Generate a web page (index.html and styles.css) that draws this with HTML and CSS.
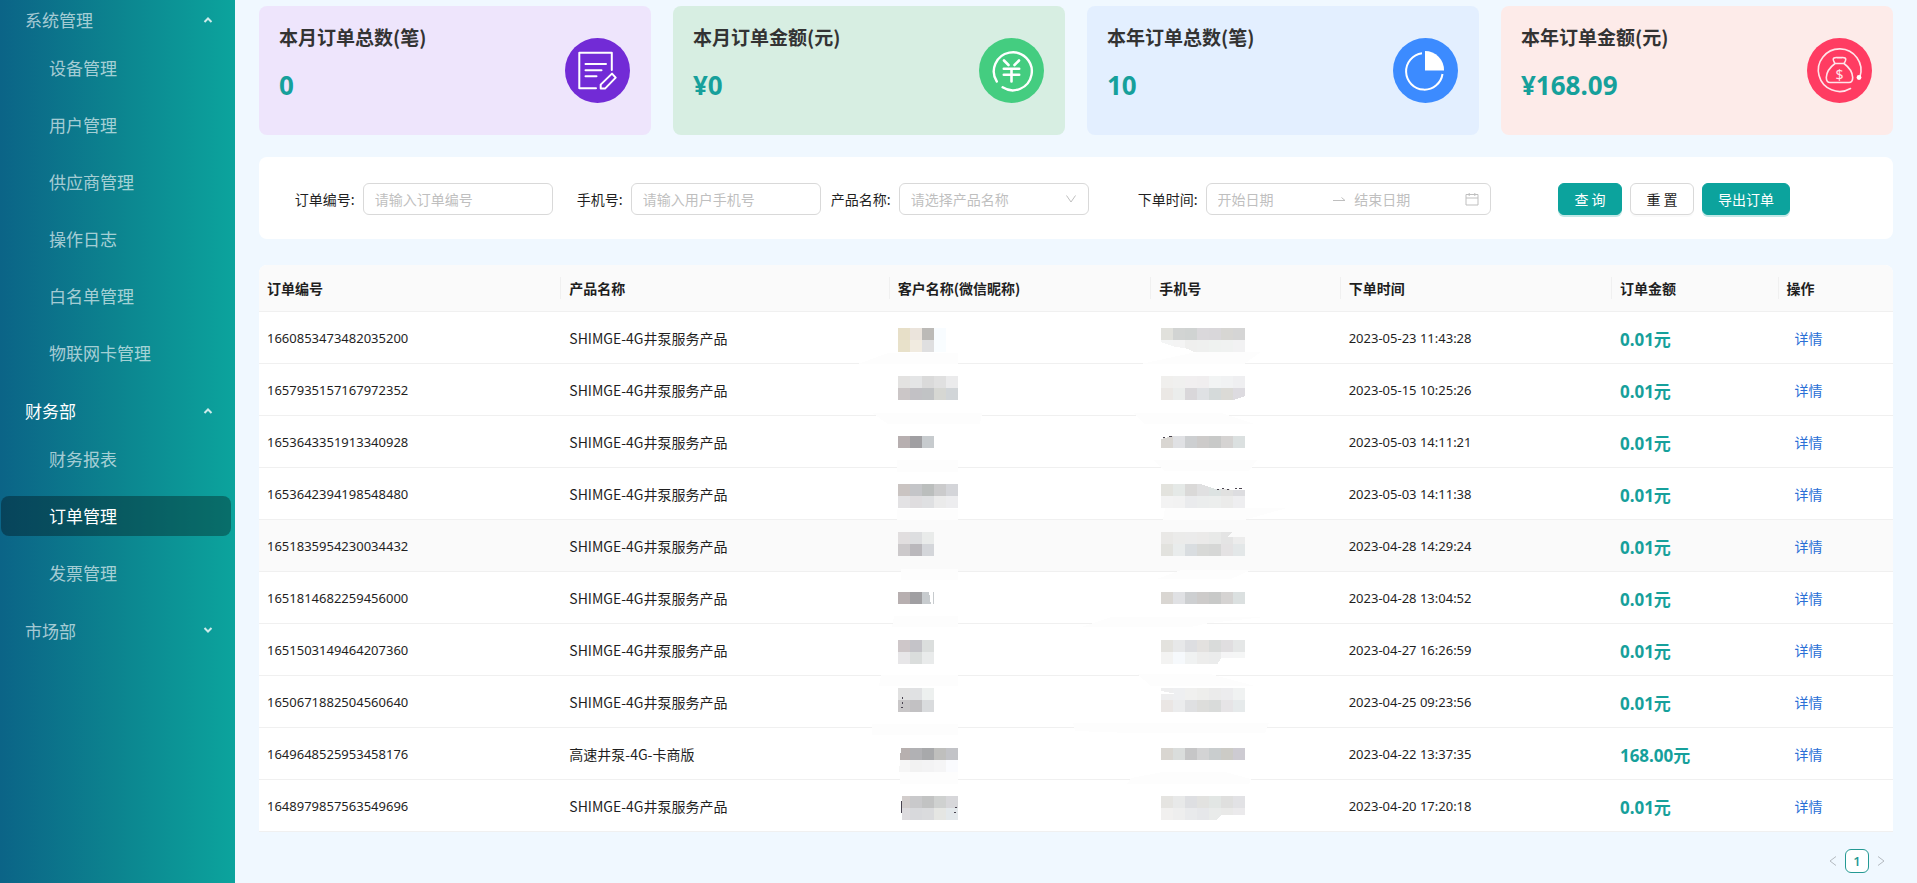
FILE: index.html
```html
<!DOCTYPE html>
<html lang="zh-CN">
<head>
<meta charset="utf-8">
<title>订单管理</title>
<link rel="stylesheet" href="styles.css">
</head>
<body>
<div class="layout">
  <nav class="sidebar">
    <section class="group">
      <button class="group-title" type="button">系统管理
        <svg class="caret" viewBox="0 0 10 10"><path d="M1.5 7 5 3.5 8.500 7"/></svg>
      </button>
      <a class="item" href="#">设备管理</a>
      <a class="item" href="#">用户管理</a>
      <a class="item" href="#">供应商管理</a>
      <a class="item" href="#">操作日志</a>
      <a class="item" href="#">白名单管理</a>
      <a class="item" href="#">物联网卡管理</a>
    </section>
    <section class="group">
      <button class="group-title open" type="button">财务部
        <svg class="caret" viewBox="0 0 10 10"><path d="M1.5 7 5 3.5 8.500 7"/></svg>
      </button>
      <a class="item" href="#">财务报表</a>
      <a class="item active" href="#">订单管理</a>
      <a class="item" href="#">发票管理</a>
    </section>
    <section class="group">
      <button class="group-title" type="button">市场部
        <svg class="caret" viewBox="0 0 10 10"><path d="M1.5 2 5 5.500 8.500 2"/></svg>
      </button>
    </section>
  </nav>

  <main class="content">
    <div class="cards">
      <article class="card purple">
        <div class="card-text"><h2>本月订单总数(笔)</h2><p>0</p></div>
        <svg class="card-icon" viewBox="0 0 65 65" fill="none" stroke="#fff" stroke-width="2" stroke-linecap="round" stroke-linejoin="round">
          <circle cx="32.5" cy="32.5" r="32.5" fill="#722bd6" stroke="none"/>
          <path d="M46.800 32V14.700H14.300V50.300H31M20.500 26H41M20.500 32.300H36.500M20.500 38.300H31.500"/>
          <path d="M47 35.600 50.700 39.600 40 50.600H35.700V46.600Z"/>
        </svg>
      </article>
      <article class="card green">
        <div class="card-text"><h2>本月订单金额(元)</h2><p>¥0</p></div>
        <svg class="card-icon" viewBox="0 0 65 65" fill="none" stroke="#fff" stroke-width="2.6" stroke-linecap="round">
          <circle cx="32.5" cy="32.5" r="32.5" fill="#44cd80" stroke="none"/>
          <path d="M17.800 43.500A19 19 0 1 1 23.600 49.300" stroke-width="2.4"/>
          <path d="M25 22.500 29.500 27M40 22.500 35.500 27M24.800 30.700H40.200M24.800 36.700H40.200M32.500 30.700V43.500"/>
        </svg>
      </article>
      <article class="card blue">
        <div class="card-text"><h2>本年订单总数(笔)</h2><p>10</p></div>
        <svg class="card-icon" viewBox="0 0 65 65" fill="none" stroke="#fff" stroke-width="2">
          <circle cx="32.5" cy="32.5" r="32.5" fill="#3c8bff" stroke="none"/>
          <path d="M29 15.200A18.300 18.300 0 1 0 49.500 36"/>
          <path d="M32 13A19 19 0 0 1 51 32.500H32Z" fill="#fff" stroke="none"/>
        </svg>
      </article>
      <article class="card red">
        <div class="card-text"><h2>本年订单金额(元)</h2><p>¥168.09</p></div>
        <svg class="card-icon" viewBox="0 0 65 65" fill="none" stroke="#ffe4ea" stroke-width="1.600" stroke-linecap="round">
          <circle cx="32.5" cy="32.5" r="32.5" fill="#ff3c62" stroke="none"/>
          <path d="M53 38.500A21.300 21.300 0 1 0 43.500 50.500"/>
          <circle cx="52" cy="39.500" r="2.400" fill="#fff" stroke="none"/>
          <path d="M28 25.500C26 22.500 25.500 21 27 20 29 19 30.500 20 32.500 19.500 34.500 20 36 19 38 20 39.500 21 39 22.500 37 25.500M28 25.500H37M28 25.500C22 30 19.500 34 19.300 39.500 19.300 43.500 20.500 44.500 23 44.500H42C44.500 44.500 45.700 43.500 45.700 39.500 45.500 34 43 30 37 25.500" stroke-linejoin="round"/>
          <text class="dollar" x="32.500" y="41.500" text-anchor="middle">$</text>
        </svg>
      </article>
    </div>

    <form class="filters">
      <div class="field"><label for="order-no">订单编号:</label><input class="control" id="order-no" type="text" placeholder="请输入订单编号"></div>
      <div class="field"><label for="phone">手机号:</label><input class="control" id="phone" type="text" placeholder="请输入用户手机号"></div>
      <div class="field"><label for="product">产品名称:</label>
        <div class="select-box control">
          <select id="product"><option>请选择产品名称</option></select>
          <svg class="arrow" viewBox="0 0 12 12"><path d="M1.500 2.500 6 9 10.500 2.500"/></svg>
        </div>
      </div>
      <div class="field"><label for="start">下单时间:</label>
        <div class="range control">
          <input id="start" type="text" placeholder="开始日期">
          <svg class="swap" viewBox="0 0 14 14"><path d="M1 8.500H13L9.500 5.500"/></svg>
          <input type="text" placeholder="结束日期" aria-label="结束日期">
          <svg class="calendar" viewBox="0 0 14 14"><path d="M1 2.500H13V13H1ZM1 6H13M4.200 1V4M9.800 1V4"/></svg>
        </div>
      </div>
      <div class="actions">
        <button class="btn primary" type="button">查 询</button>
        <button class="btn" type="button">重 置</button>
        <button class="btn primary" type="button">导出订单</button>
      </div>
    </form>

    <table class="orders">
      <colgroup><col class="c-no"><col class="c-product"><col class="c-name"><col class="c-phone"><col class="c-time"><col class="c-amount"><col class="c-action"></colgroup>
      <thead>
        <tr><th>订单编号</th><th>产品名称</th><th>客户名称(微信昵称)</th><th>手机号</th><th>下单时间</th><th>订单金额</th><th>操作</th></tr>
      </thead>
      <tbody id="rows"></tbody>
    </table>

    <div class="pager">
      <button class="page-arrow" type="button" aria-label="上一页"><svg viewBox="0 0 12 12"><path d="M9 1.500 3 6 9 10.500"/></svg></button>
      <button class="page-current" type="button">1</button>
      <button class="page-arrow" type="button" aria-label="下一页"><svg viewBox="0 0 12 12"><path d="M3 1.500 9 6 3 10.500"/></svg></button>
    </div>
  </main>
</div>
<script src="script.js"></script>
</body>
</html>
```

FILE: styles.css
```css
* { box-sizing: border-box; }

body {
  margin: 0;
  background: #f0f8ff;
  color: #1f1f1f;
  font: 14px/22px "Noto Sans CJK SC", "Noto Sans", sans-serif;
}

button, input, select { font: inherit; color: inherit; margin: 0; }
button { cursor: pointer; }
a { text-decoration: none; }
svg { flex: none; }

.layout { display: flex; min-height: 100vh; }

/* sidebar */
.sidebar {
  flex: none;
  width: 235px;
  padding: 0 4px 0 1px;
  background: linear-gradient(90deg, #0b6487 0%, #0c848f 50%, #0ca49d 100%);
  font-size: 17px;
}
.group { display: flex; flex-direction: column; gap: 17px; margin-bottom: 18px; }
.group-title {
  display: flex;
  align-items: center;
  justify-content: space-between;
  height: 40px;
  margin-bottom: -9px;
  padding: 0 18px 0 24px;
  border: 0;
  background: none;
  color: rgba(255, 255, 255, 0.65);
}
.caret { width: 10px; height: 10px; fill: none; stroke: currentColor; stroke-width: 2; }
.group-title .caret { color: rgba(255, 255, 255, 0.8); }
.item {
  display: flex;
  align-items: center;
  height: 40px;
  padding-left: 48px;
  border-radius: 8px;
  color: rgba(255, 255, 255, 0.65);
}
.group-title.open, .item.active { color: #fff; }
.item.active { background: rgba(0, 0, 0, 0.32); }

/* summary cards */
.content { flex: 1; min-width: 0; padding: 6px 24px 0; }
.cards { display: grid; grid-template-columns: repeat(4, 1fr); gap: 22px; }
.card {
  display: flex;
  align-items: center;
  justify-content: space-between;
  padding: 0 21px 0 20px;
  border-radius: 8px;
}
.card-text { padding: 15px 0 30px; }
.card h2 { margin: 0 0 12px; color: #333; font-size: 19px; line-height: 32px; }
.card p {
  margin: 0;
  color: #16a09b;
  font: bold 26px/40px "Noto Sans", "Noto Sans CJK SC", sans-serif;
}
.card-icon { width: 65px; height: 65px; }
.dollar { fill: #ffe4ea; stroke: none; font: 14px "Noto Sans", sans-serif; }
.purple { background: #eee5fc; }
.green { background: #d7eee2; }
.blue { background: #e3efff; }
.red { background: #fdebe9; }

/* filter form */
.filters {
  display: grid;
  grid-template-columns: 2fr 2fr 2fr 3fr 3fr;
  align-items: center;
  margin-top: 22px;
  padding: 26px 0 24px 26px;
  border-radius: 8px;
  background: #fff;
}
.field { display: flex; align-items: center; justify-content: flex-end; gap: 8px; min-width: 0; }
.field label { white-space: nowrap; }
.control {
  width: 71%;
  height: 32px;
  padding: 0 11px;
  border: 1px solid #d9d9d9;
  border-radius: 6px;
  background: #fff;
}
.field input { outline: 0; }
.field ::placeholder { color: #bfbfbf; opacity: 1; }
.select-box, .range { display: flex; align-items: center; }
.select-box select {
  flex: 1;
  min-width: 0;
  border: 0;
  outline: 0;
  padding: 0;
  appearance: none;
  background: none;
  color: #bfbfbf;
}
.arrow, .swap, .calendar { fill: none; stroke: #bfbfbf; stroke-width: 1; }
.arrow { width: 12px; height: 12px; }
.swap { width: 14px; height: 14px; margin: 0 8px; }
.calendar { width: 14px; height: 14px; margin-left: 4px; }
.range input { flex: 1; min-width: 0; width: 0; padding: 0; border: 0; background: none; }
.actions { display: flex; gap: 8px; padding-left: 67px; }
.btn {
  min-width: 64px;
  height: 32px;
  padding: 0 15px;
  border: 1px solid #d9d9d9;
  border-radius: 6px;
  background: #fff;
  box-shadow: 0 2px 0 rgba(0, 0, 0, 0.02);
  white-space: nowrap;
}
.btn.primary {
  border-color: #0ca39d;
  background: #0ca39d;
  box-shadow: 0 2px 0 rgba(12, 163, 157, 0.25);
  color: #fff;
}

/* orders table */
.orders {
  width: 100%;
  margin-top: 26px;
  border-spacing: 0;
  table-layout: fixed;
  background: #fff;
  border-radius: 8px 8px 0 0;
}
.c-no { width: 18.5%; }
.c-product { width: 20.1%; }
.c-name { width: 16%; }
.c-phone { width: 11.6%; }
.c-time { width: 16.6%; }
.c-amount { width: 10.2%; }
.c-action { width: 7%; }
.orders th, .orders td { padding: 0 8px; border-bottom: 1px solid #f0f0f0; text-align: left; }
.orders th {
  height: 47px;
  background: linear-gradient(#f0f0f0, #f0f0f0) right center / 1px 22px no-repeat #fafafa;
}
.orders th:first-child { border-top-left-radius: 8px; }
.orders th:last-child { border-top-right-radius: 8px; background: #fafafa; }
.orders td { height: 52px; }
.orders tr.hover td { background: #fafafa; }
.orders td.num { font-family: "Noto Sans", sans-serif; font-size: 13px; }
.orders td.amount {
  padding-top: 4px;
  color: #16a09b;
  font: bold 17px/24px "Noto Sans", "Noto Sans CJK SC", sans-serif;
}
.orders td.masked { padding: 0 8px; }
.orders td.masked.phone { padding-left: 10px; }
.mosaic { position: relative; display: block; width: 84px; height: 51px; overflow: visible; }
.orders td.link { padding-left: 16px; }
.link a { color: #2a6fd6; }

/* pagination */
.pager { display: flex; justify-content: flex-end; margin-top: 17px; }
.page-arrow, .page-current {
  display: flex;
  align-items: center;
  justify-content: center;
  width: 24px;
  height: 24px;
  padding: 0;
  border: 0;
  background: none;
}
.page-arrow svg { width: 12px; height: 12px; fill: none; stroke: #b4bac0; stroke-width: 1; }
.page-current {
  border: 1px solid #249993;
  border-radius: 6px;
  background: #fff;
  color: #249993;
  font: 600 13px/22px "Open Sans", "Noto Sans", sans-serif;
}
```

FILE: script.js
```js
// Masked cells: y is the top of the tiles inside the row, rows hold 12px tile colours,
// cover holds light strokes left by the masking brush, marks holds dark leftovers.
const P = 'SHIMGE-4G井泵服务产品';
const orders = [
  { no: '1660853473482035200', time: '2023-05-23 11:43:28', y: 16,
    name: ['e7dfc8 ebe4dc bcbab7 f8fcff', 'e8e1ca f1ebe0 dfdfe0 f9fdff'],
    phone: ['e1e1dc d2d4d3 d0d3d2 dad8db d9d7da d7d6d3 d5d5d5', 'f4f5f5 f4f4f4 efefee eff0ef eff2f0 f0f2f1 f2f2f3'],
    nameCover: '-40,52 -10,41 60,41 60,52', phoneCover: '-20,52 35,40 100,40 83,52', phoneCut: '0,30 14,35 24,36 36,41 0,41' },
  { no: '1657935157167972352', time: '2023-05-15 10:25:26', y: 12,
    name: ['e3e2e1 e4e5e6 dadada e0e0e0 ebebec', 'cbc6c7 c2c1c5 c1c3c5 d6d7d3 d1d5d8'],
    phone: ['f0efed f0f0ef f1eff0 f0eeef f2f4f4 f1f2f3 efeff1', 'ebe8e5 ebedec d9d7da dfe1e4 d5dada dbdad6 dddbe0'],
    nameCover: '-26,49 84,49 82,60 -10,60', phoneCover: '-28,49 60,49 94,60 -16,60', phoneCut: '72,36 84,32 84,37' },
  { no: '1653643351913340928', time: '2023-05-03 14:11:21', y: 20,
    name: ['b7afb0 a09fa2 c7cbce'], phone: ['d9d6d2 e0e1e4 cdcfd1 cdcbca c8c9c8 d5d3d2 dbe0e0'],
    nameCover: '-1,44 60,44 60,56 -1,56', phoneCover: '-8,44 96,44 88,55 4,55', phoneCut: '0,20 12,20 0,23', phoneMarks: [[2, 21, 2], [8, 20, 3]] },
  { no: '1653642394198548480', time: '2023-05-03 14:11:38', y: 16,
    name: ['cac4c2 c4c5c8 bbbebd cbcbcc d4d5d9', 'e3e2e4 dfdddf dfe0e2 ebebeb ededef'],
    phone: ['e3e3de e5e9e7 dad9d8 e0e0e1 dde3e2 e1e1e0 dddde0', 'f3f3f3 f2f2f2 eaebed ebeded eceeed ebebea eeeef0'],
    nameCover: '-1,41 60,41 60,52 -1,52', phoneCover: '4,40 126,40 83,52 2,52', phoneCut: '36,15 84,15 84,22 54,21', phoneMarks: [[56, 21, 2], [61, 20, 2], [66, 21, 2], [74, 20, 2], [78, 20, 3]] },
  { no: '1651835954230034432', time: '2023-04-28 14:29:24', y: 12, hover: true,
    name: ['e1dedf dddee0 e9ebea', 'ccc9cb bab8bc d4d6da'],
    phone: ['e9e8e6 ebebea ebebeb ebeae9 e8e9e8 e4e4e4 ececec', 'e2e2de e9ecec d9dde0 d8d9d7 d6d7d6 e4e2e3 e3e7e8'],
    nameCover: '3,49 60,49 60,60 3,60', phoneCover: '-4,59 20,50 90,50 70,59', phoneCut: '73,11 84,11 84,17 66,17' },
  { no: '1651814682259456000', time: '2023-04-28 13:04:52', y: 20,
    name: ['b7afb0 a09fa2 c7cbce'], phone: ['d9d6d2 e0e1e4 cdcfd1 cdcbca c8c9c8 d5d3d2 dbe0e0'],
    nameCover: '-4,44 60,44 60,55 -6,55', phoneCover: '-80,55 -50,45 104,45 48,51 30,55', nameCut: '31,19 35,19 35,33 33,33' },
  { no: '1651503149464207360', time: '2023-04-27 16:26:59', y: 16,
    name: ['cec7c9 c4c3c8 dbdedd', 'e7e6e8 dadddc e9ebeb'],
    phone: ['e3e2de e7e8e9 dddee1 e3e1df d9dbda e0dee0 e5e7e7', 'f3f3f2 f6f9fc f0f2f2 ededec ebecec f5f5f6 f5f6f6'],
    nameCover: '-17,51 60,51 60,62 -19,62', phoneCover: '-24,50 49,50 94,62 -10,62', phoneCut: '60,34 84,34 84,41 56,41' },
  { no: '1650671882504560640', time: '2023-04-25 09:23:56', y: 12,
    name: ['e1e1e1 e0e1e3 edf0ef', 'c9c7c8 c2c1c3 d9dbdd'],
    phone: ['eeeeef eeeff1 f0f0ef eeeeec ebebeb ececee f0f2f2', 'eae6e4 ebeced dfe0e2 dddddb d9dbda e6e4e6 e6eaeb'],
    nameCover: '-26,48 60,48 60,59 -26,59', phoneCover: '-88,47 108,47 104,57 -30,57 -86,55', phoneCut: '0,15 16,18 0,18', nameMarks: [[4, 21, 1], [4, 26, 1], [3, 31, 2]] },
  { no: '1649648525953458176', product: '高速井泵-4G-卡商版', time: '2023-04-22 13:37:35', amount: '168.00元', y: 20,
    name: ['b7b0af b1b1b4 a8a9ab bfbfbd c2c3c7', 'f6f6f6 f2f2f2 f3f3f4 f5f5f6 fafbfe'],
    phone: ['d9d6d1 dadddc c6c6c7 d3d3d4 c9cdce cccbc6 cdcbd2'],
    nameCover: '2,44 60,44 60,56 2,56', phoneCover: '-34,56 -30,50 2,44 64,44 90,51 88,56', nameCut: '0,19 3,19 1,45 0,45' },
  { no: '1648979857563549696', time: '2023-04-20 17:20:18', y: 16,
    name: ['d2cdcc c9c9cb c2c3c3 cfd1d0 d7d7da', 'dddbde d8d9dc dadbdd e5e6e3 e3e8eb'],
    phone: ['e5e4e1 e8e9e9 dedfe2 e2e2e0 e2e6e4 dfdfde e2e2e5', 'f1f0ef eeeeee e9eaec e6e7ea e9ebea e9e9e8 ebeaec'],
    nameCut: '0,15 4,15 4,41 0,41', phoneCut: '60,35 84,35 84,41 54,41', nameMarks: [[3, 21, 1], [3, 23, 1], [3, 25, 1], [3, 27, 1], [3, 29, 1], [3, 31, 1], [57, 27, 2], [56, 32, 2]] },
];

function mosaic(o, key) {
  const tiles = o[key].map((line, r) => line.split(' ').map((c, i) =>
    `<rect x="${i * 12}" y="${o.y + r * 12}" width="12" height="12" fill="#${c}"/>`).join('')).join('');
  const bg = o.hover ? '#fafafa' : '#fff';
  const cover = o[key + 'Cover'] ? `<polygon points="${o[key + 'Cover']}" fill="#fdfdfd"/>` : '';
  const cut = o[key + 'Cut'] ? `<polygon points="${o[key + 'Cut']}" fill="${bg}"/>` : '';
  const marks = (o[key + 'Marks'] || []).map(([x, y, w]) =>
    `<rect x="${x}" y="${y}" width="${w}" height="${w > 1 ? 1 : 2}" fill="#4a4450"/>`).join('');
  return `<svg class="mosaic" viewBox="0 0 84 51" shape-rendering="crispEdges">${cover}${tiles}${cut}${marks}</svg>`;
}

document.getElementById('rows').innerHTML = orders.map(o => `
  <tr${o.hover ? ' class="hover"' : ''}>
    <td class="num">${o.no}</td>
    <td>${o.product || P}</td>
    <td class="masked">${mosaic(o, 'name')}</td>
    <td class="masked phone">${mosaic(o, 'phone')}</td>
    <td class="num">${o.time}</td>
    <td class="amount">${o.amount || '0.01元'}</td>
    <td class="link"><a href="#">详情</a></td>
  </tr>`).join('');
```
